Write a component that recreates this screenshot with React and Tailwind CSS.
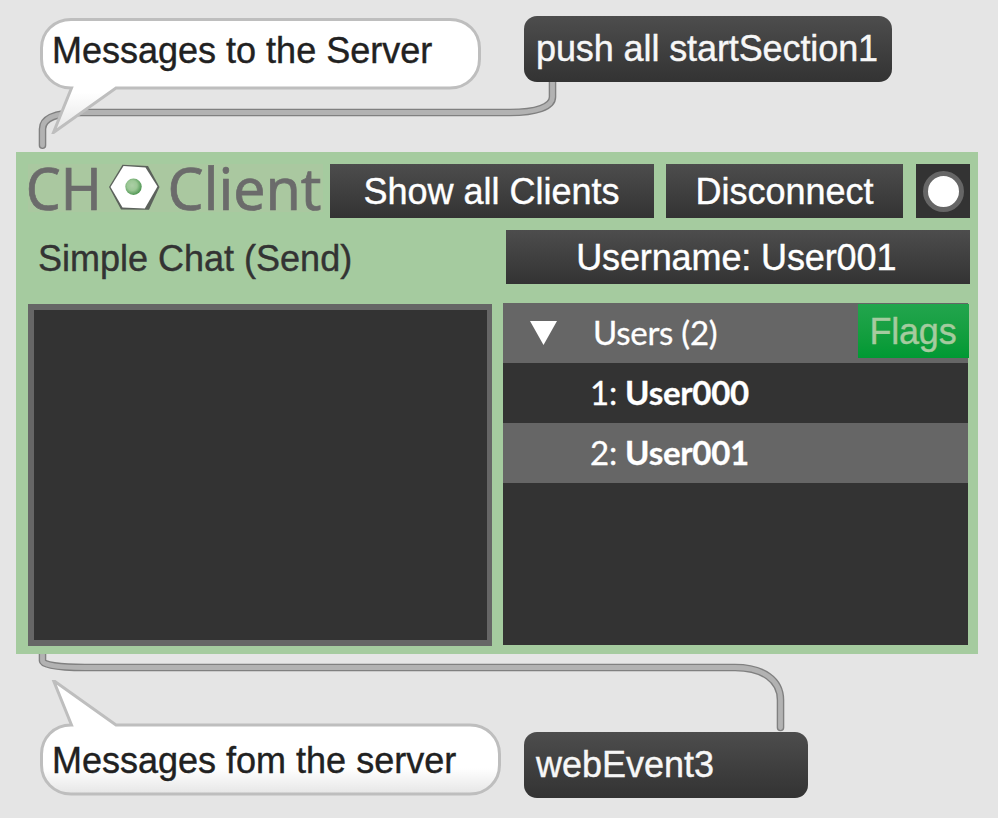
import React from "react";

const SANS = "font-['Liberation_Sans',Arial,sans-serif] text-[36px] leading-[42px] whitespace-pre [-webkit-text-stroke:0.4px]";
const DARK = "bg-linear-to-b from-[#4d4d4d] to-[#333333]";

function Cable({ d }) {
  return (
    <g fill="none" strokeLinecap="round">
      <path d={d} stroke="#808080" strokeWidth="7.6" />
      <path d={d} stroke="#b2b2b2" strokeWidth="4.8" />
    </g>
  );
}

function Cables() {
  return (
    <svg className="absolute inset-0" width="998" height="818" viewBox="0 0 998 818">
      <Cable d="M42.5 145.3 V129 C42.5 118 57 112.5 82 112.5 H510 C536 112.5 552.5 107 552.5 97 V80" />
      <Cable d="M42.5 650 V661 C42.5 665 60 667.5 85 667.5 H735 C763 667.5 780.5 680 780.5 700 V727.5" />
    </svg>
  );
}

function Bubble({ id, width, height, d, stops, className, children }) {
  return (
    <div className={"relative shrink-0 " + className}>
      <svg className="absolute inset-0" width={width} height={height} viewBox={`0 0 ${width} ${height}`}>
        <defs>
          <linearGradient id={id} x1="0" y1="0" x2="0" y2={height} gradientUnits="userSpaceOnUse">
            <stop offset="0" stopColor="#ffffff" />
            <stop offset={stops} stopColor="#ffffff" />
            <stop offset="1" stopColor="#e4e4e4" />
          </linearGradient>
        </defs>
        <path d={d} fill={`url(#${id})`} stroke="#bebebe" strokeWidth="3" />
      </svg>
      <div className={"relative text-[#212121] " + SANS}>{children}</div>
    </div>
  );
}

function MessageBox({ className, children }) {
  return (
    <div className={"relative h-[66px] shrink-0 rounded-[13px] pl-3 pt-3 text-[#f7f7f7] " + DARK + " " + SANS + " " + className}>
      {children}
    </div>
  );
}

function Button({ className, children }) {
  return (
    <button className={"flex h-[54px] shrink-0 items-center justify-center pt-0.5 text-white " + DARK + " " + SANS + " " + className}>
      {children}
    </button>
  );
}

function Logo() {
  return (
    <svg className="shrink-0 overflow-visible" width="295" height="54" viewBox="28 164 295 54">
      <defs>
        <radialGradient id="ball" cx="0.42" cy="0.42" r="0.6">
          <stop offset="0" stopColor="#abcfa5" />
          <stop offset="0.5" stopColor="#9bc795" />
          <stop offset="1" stopColor="#4c9450" />
        </radialGradient>
        <filter id="soft" x="-10%" y="-10%" width="120%" height="120%">
          <feGaussianBlur stdDeviation="0.5" />
        </filter>
      </defs>
      <rect x="28" y="164" width="295" height="48" fill="#aac8a0" />
      <g fill="#6b6b6b" stroke="#6b6b6b" strokeWidth="0.7" fontFamily="'Noto Sans', sans-serif" fontSize="58">
        <text x="25.8" y="210" textLength="76" lengthAdjust="spacingAndGlyphs">CH</text>
        <text x="167.5" y="210" textLength="154" lengthAdjust="spacingAndGlyphs">Client</text>
      </g>
      <g filter="url(#soft)">
        <path d="M122.5 164.8 L148 166 L159.5 187 L149 209.8 L121 209.5 L109 187 Z" fill="#5c625c" />
        <path d="M123.5 166 L145.5 167.5 L157.5 186.5 L144.8 208.5 L122.5 207.5 L110.5 187 Z" fill="#ffffff" />
        <circle cx="133.5" cy="186.8" r="8.2" fill="url(#ball)" />
      </g>
    </svg>
  );
}

function UserRow({ className, index, name }) {
  return (
    <div className={"flex h-[60px] items-center whitespace-pre pb-0.5 pl-[87px] " + className}>
      <span>{index}: </span>
      <span className="font-bold">{name}</span>
    </div>
  );
}

function ClientPanel() {
  return (
    <section className="relative ml-4 h-[502px] w-[962px] bg-[#a5cb9f] pl-3 pt-3">
      <div className="flex">
        <Logo />
        <Button className="ml-[7px] w-[324px] pr-px">Show all Clients</Button>
        <Button className="ml-3 w-[237px]">Disconnect</Button>
        <button className="ml-[13px] flex size-[54px] items-center justify-center bg-[#333333]">
          <span className="size-[41px] rounded-full border-[5px] border-[#666666] bg-white" />
        </button>
      </div>
      <div className="mt-3 flex">
        <div className={"w-[478px] pl-2.5 pt-2 text-[#333333] " + SANS}>Simple Chat (Send)</div>
        <Button className="w-[463.5px] pr-[3px] tracking-[-0.12px]">Username: User001</Button>
      </div>
      <div className="mt-[19px] flex">
        <div className="mt-px h-[342px] w-[464px] border-[6px] border-r-[5px] border-[#666666] bg-[#333333]" />
        <div className="relative ml-[11px] h-[342px] w-[465px] bg-[#333333] font-['Lato',sans-serif] text-[33px] leading-10 tracking-[-0.25px] text-white [-webkit-text-stroke:0.3px]">
          <div className="flex h-[60px] items-center bg-[#666666] pl-[27px]">
            <svg width="27" height="24" viewBox="0 0 27 24">
              <path d="M0 0 H27 L13.5 24 Z" fill="#ffffff" />
            </svg>
            <span className="ml-9 pb-0.5">Users (2)</span>
          </div>
          <UserRow className="bg-[#333333]" index={1} name="User000" />
          <UserRow className="bg-[#666666]" index={2} name="User001" />
          <button className={"absolute left-[355px] top-px flex h-[54px] w-[111px] items-center justify-center bg-linear-to-b from-[#22a54d] to-[#009933] pr-px pt-0.5 text-[#a5cb9f] " + SANS}>
            Flags
          </button>
        </div>
      </div>
    </section>
  );
}

export default function App() {
  return (
    <main className="relative flex h-[818px] w-[998px] flex-col overflow-hidden bg-[#e5e5e5]">
      <Cables />
      <div className="flex h-[152px] pl-10 pt-4">
        <Bubble
          id="topFill"
          width={442}
          height={118}
          stops="0.65"
          className="h-[118px] w-[484px] pl-3 pt-[14px]"
          d="M31 72 C14 72 1.5 59 1.5 43 V32 C1.5 16 14 3.5 31 3.5 H410 C427 3.5 439.5 16 439.5 32 V43 C439.5 59 427 72 410 72 H76 L13.5 116.5 L31.5 72 Z"
        >
          Messages to the Server
        </Bubble>
        <MessageBox className="w-[368px] tracking-[-0.1px]">push all startSection1</MessageBox>
      </div>
      <ClientPanel />
      <div className="flex pl-10 pt-[26px]">
        <Bubble
          id="bottomFill"
          width={461}
          height={116}
          stops="0.76"
          className="h-[116px] w-[484px] pl-3 pt-[60px]"
          d="M31.5 45 L13.5 0.5 L76 45 H430 C447 45 459.5 58 459.5 74 V85 C459.5 101 447 114 430 114 H31 C14 114 1.5 101 1.5 85 V74 C1.5 58 14 45 31 45 Z"
        >
          Messages fom the server
        </Bubble>
        <MessageBox className="mt-[52px] w-[284px]">webEvent3</MessageBox>
      </div>
    </main>
  );
}
